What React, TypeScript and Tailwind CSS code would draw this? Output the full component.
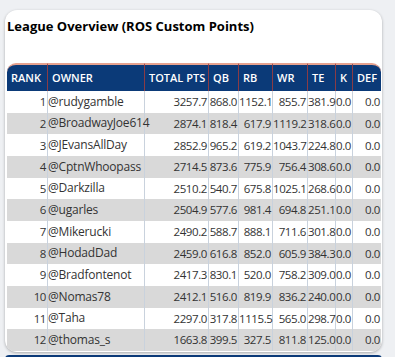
import React from "react";

interface Row {
	rank: number;
	owner: string;
	total: string;
	qb: string;
	rb: string;
	wr: string;
	te: string;
	k: string;
	def: string;
}

const rows: Row[] = [
	{ rank: 1, owner: "@rudygamble", total: "3257.7", qb: "868.0", rb: "1152.1", wr: "855.7", te: "381.9", k: "0.0", def: "0.0" },
	{ rank: 2, owner: "@BroadwayJoe614", total: "2874.1", qb: "818.4", rb: "617.9", wr: "1119.2", te: "318.6", k: "0.0", def: "0.0" },
	{ rank: 3, owner: "@JEvansAllDay", total: "2852.9", qb: "965.2", rb: "619.2", wr: "1043.7", te: "224.8", k: "0.0", def: "0.0" },
	{ rank: 4, owner: "@CptnWhoopass", total: "2714.5", qb: "873.6", rb: "775.9", wr: "756.4", te: "308.6", k: "0.0", def: "0.0" },
	{ rank: 5, owner: "@Darkzilla", total: "2510.2", qb: "540.7", rb: "675.8", wr: "1025.1", te: "268.6", k: "0.0", def: "0.0" },
	{ rank: 6, owner: "@ugarles", total: "2504.9", qb: "577.6", rb: "981.4", wr: "694.8", te: "251.1", k: "0.0", def: "0.0" },
	{ rank: 7, owner: "@Mikerucki", total: "2490.2", qb: "588.7", rb: "888.1", wr: "711.6", te: "301.8", k: "0.0", def: "0.0" },
	{ rank: 8, owner: "@HodadDad", total: "2459.0", qb: "616.8", rb: "852.0", wr: "605.9", te: "384.3", k: "0.0", def: "0.0" },
	{ rank: 9, owner: "@Bradfontenot", total: "2417.3", qb: "830.1", rb: "520.0", wr: "758.2", te: "309.0", k: "0.0", def: "0.0" },
	{ rank: 10, owner: "@Nomas78", total: "2412.1", qb: "516.0", rb: "819.9", wr: "836.2", te: "240.0", k: "0.0", def: "0.0" },
	{ rank: 11, owner: "@Taha", total: "2297.0", qb: "317.8", rb: "1115.5", wr: "565.0", te: "298.7", k: "0.0", def: "0.0" },
	{ rank: 12, owner: "@thomas_s", total: "1663.8", qb: "399.5", rb: "327.5", wr: "811.8", te: "125.0", k: "0.0", def: "0.0" },
];

const headers = [
	{ label: "RANK", w: "w-[40px]" },
	{ label: "OWNER", w: "w-[97px]" },
	{ label: "TOTAL PTS", w: "w-[64px]" },
	{ label: "QB", w: "w-[30px]" },
	{ label: "RB", w: "w-[34px]" },
	{ label: "WR", w: "w-[35px]" },
	{ label: "TE", w: "w-[28px]" },
	{ label: "K", w: "w-[17px]" },
	{ label: "DEF", w: "w-[29px]" },
];

// numbers sit flush against the right border, like the source grid
const num =
	"text-right pr-[1px] border-l border-[#c9d2dd] whitespace-nowrap text-[11.5px] tracking-[-0.4px]";

export default function App() {
	return (
		<div className="w-[395px] h-[357px] overflow-hidden bg-[#eef0f3] pt-[10px] pl-[5px] font-['Open_Sans',sans-serif] text-[12px] text-[#333]">
			<div className="w-[377px] h-[342px] bg-white rounded-[12px] shadow-[0_1px_3px_rgba(0,0,0,0.3)] overflow-hidden">
				<div className="h-[53px] pl-[2px] pt-[6px]">
					<h2 className="text-[13px] font-bold text-black leading-[20px]">
						League Overview (ROS Custom Points)
					</h2>
				</div>
				<table className="ml-[2px] w-[374px] table-fixed border-separate border-spacing-0">
					<thead>
						<tr className="h-[28px] text-white">
							{headers.map((h, i) => (
								<th
									key={h.label}
									className={`${h.w} bg-[#0b3a78] px-[4px] text-left font-semibold text-[11px] whitespace-nowrap border-t-2 border-t-[#e6a28f] ${
										i === 0 ? "rounded-tl-[9px]" : "border-l border-l-[#8a3b45]"
									} ${i === headers.length - 1 ? "rounded-tr-[9px]" : ""}`}
								>
									{h.label}
								</th>
							))}
						</tr>
					</thead>
					<tbody>
						{rows.map((r, i) => (
							<tr
								key={r.rank}
								className={`h-[21.67px] ${i % 2 === 1 ? "bg-[#d9d9d9]" : "bg-white"}`}
							>
								<td className="text-right pr-[1px] whitespace-nowrap text-[11.5px] tracking-[-0.4px]">
									{r.rank}
								</td>
								<td className="text-left border-l border-[#c9d2dd] whitespace-nowrap tracking-[-0.2px]">
									{r.owner}
								</td>
								<td className={num}>{r.total}</td>
								<td className={num}>{r.qb}</td>
								<td className={num}>{r.rb}</td>
								<td className={num}>{r.wr}</td>
								<td className={num}>{r.te}</td>
								<td className={num}>{r.k}</td>
								<td className={num}>{r.def}</td>
							</tr>
						))}
					</tbody>
				</table>
			</div>
			<div className="mt-[3px] h-[4px] w-[377px] bg-[#0b3a78] rounded-t-[4px]" />
		</div>
	);
}
